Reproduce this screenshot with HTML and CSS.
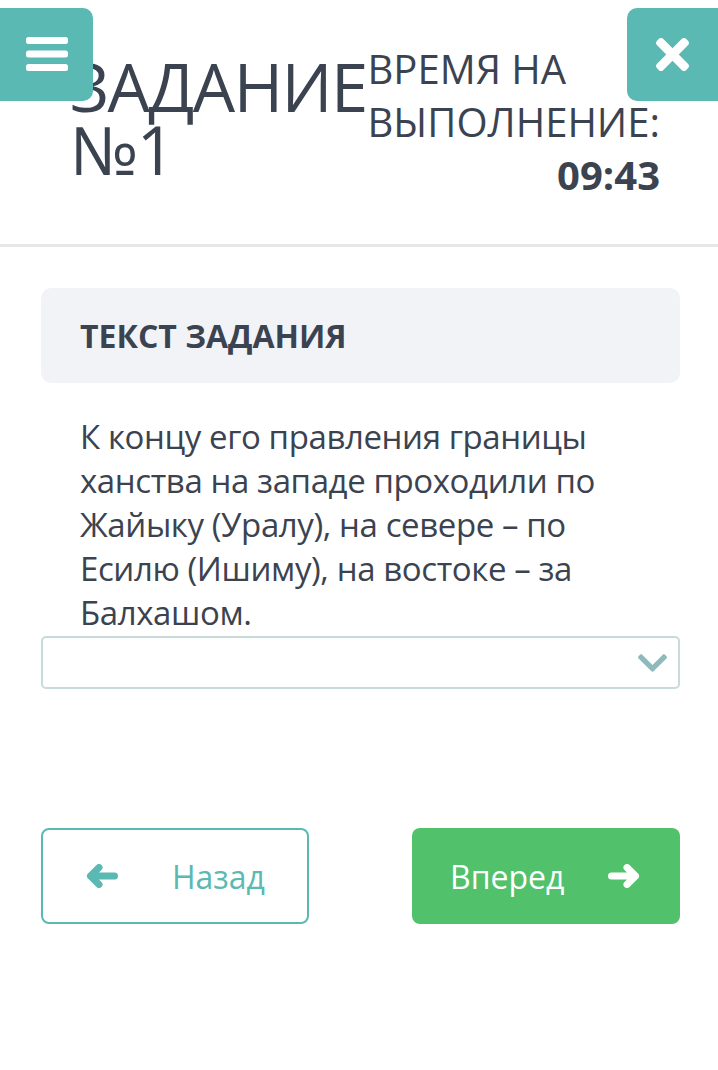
FILE: index.html
```html
<!DOCTYPE html>
<html lang="ru">
<head>
    <meta charset="UTF-8">
    <meta name="viewport" content="width=device-width, initial-scale=1.0">
    <title>Задание №1</title>
    <link rel="stylesheet" href="styles.css">
</head>
<body>

<!-- Шапка: номер задания и таймер -->
<header class="header">
    <button class="side-btn menu-btn" aria-label="Меню">
        <svg width="42" height="35" viewBox="0 0 42 35">
            <rect x="0" y="0" width="42" height="7" rx="2.5" fill="#fff"/>
            <rect x="0" y="13.5" width="42" height="7" rx="2.5" fill="#fff"/>
            <rect x="0" y="27" width="42" height="7" rx="2.5" fill="#fff"/>
        </svg>
    </button>
    <h1 class="task-title">ЗАДАНИЕ №1</h1>
    <div class="timer">
        <div>ВРЕМЯ НА</div>
        <div>ВЫПОЛНЕНИЕ:</div>
        <div class="timer-value">09:43</div>
    </div>
    <button class="side-btn close-btn" aria-label="Закрыть">
        <svg width="33" height="33" viewBox="0 80 352 352">
            <path fill="#fff" d="M242.72 256l100.07-100.07c12.28-12.28 12.28-32.19 0-44.48l-22.24-22.24c-12.28-12.28-32.19-12.28-44.48 0L176 189.28 75.93 89.21c-12.28-12.28-32.19-12.28-44.48 0L9.210 111.45c-12.28 12.28-12.28 32.19 0 44.48L109.28 256 9.21 356.07c-12.28 12.28-12.28 32.19 0 44.48l22.24 22.24c12.28 12.28 32.2 12.28 44.48 0L176 322.72l100.07 100.07c12.28 12.28 32.2 12.28 44.48 0l22.24-22.24c12.28-12.28 12.28-32.19 0-44.48L242.72 256z"/>
        </svg>
    </button>
</header>

<main class="content">
    <div class="task-head">ТЕКСТ ЗАДАНИЯ</div>
    <p class="task-text">К концу его правления границы ханства на западе проходили по Жайыку (Уралу), на севере – по Есилю (Ишиму), на востоке – за Балхашом.</p>

    <!-- Выбор ответа -->
    <div class="answer-select">
        <svg width="29" height="18" viewBox="5 123 438 265">
            <path fill="#8dbabd" d="M207.029 381.476L12.686 187.132c-9.373-9.373-9.373-24.569 0-33.941l22.667-22.667c9.357-9.357 24.522-9.375 33.901-.04L224 284.505l154.745-154.021c9.379-9.335 24.544-9.317 33.901.04l22.667 22.667c9.373 9.373 9.373 24.569 0 33.941L240.971 381.476c-9.373 9.372-24.569 9.372-33.942 0z"/>
        </svg>
    </div>

    <div class="nav">
        <button class="nav-btn back">
            <svg width="32" height="24" viewBox="0 0 32 24">
                <path d="M28.5 12H4.5M13 3.5L4.5 12 13 20.5" fill="none" stroke="#5bb9b3" stroke-width="7" stroke-linecap="round" stroke-linejoin="round"/>
            </svg>
            <span>Назад</span>
        </button>
        <button class="nav-btn next">
            <span>Вперед</span>
            <svg width="32" height="24" viewBox="0 0 32 24">
                <path d="M3.5 12h24M19 3.5l8.5 8.5-8.5 8.5" fill="none" stroke="#fff" stroke-width="7" stroke-linecap="round" stroke-linejoin="round"/>
            </svg>
        </button>
    </div>
</main>

</body>
</html>
```

FILE: styles.css
```css
body {
    font-family: "Open Sans", "Noto Sans", sans-serif;
    color: #3b4350;
    background: #fff;
    margin: 0;
    padding: 0;
}
button {
    font-family: inherit;
    cursor: pointer;
}
.header {
    position: relative;
    display: flex;
    justify-content: space-between;
    align-items: flex-start;
    height: 247px;
    padding: 0 58px 0 70px;
    box-sizing: border-box;
    border-bottom: 3px solid #e6e7e9;
}
.side-btn {
    position: absolute;
    top: 8px;
    height: 93px;
    border: none;
    background-color: #5bb9b3;
    display: flex;
    align-items: center;
    justify-content: center;
    padding: 0;
}
.menu-btn {
    left: 0;
    width: 93px;
    border-radius: 0 10px 10px 0;
}
.close-btn {
    right: 0;
    width: 91px;
    border-radius: 10px 0 0 10px;
}
.task-title {
    width: 297px;
    margin: 55px 0 0;
    font-size: 67px;
    font-weight: 400;
    line-height: 63px;
    letter-spacing: -1.5px;
}
.timer {
    margin-top: 42px;
    font-size: 40px;
    line-height: 53px;
}
.timer .timer-value {
    text-align: right;
    font-weight: 700;
}
.content {
    padding: 41px 38px 0 41px;
}
.task-head {
    background-color: #f2f3f7;
    border-radius: 10px;
    height: 95px;
    padding: 0 39px;
    display: flex;
    align-items: center;
    font-size: 32px;
    font-weight: 700;
}
.task-text {
    margin: 32px 0 0;
    padding: 0 60px 0 39px;
    font-size: 33px;
    line-height: 44px;
    letter-spacing: -0.4px;
}
.answer-select {
    height: 53px;
    margin-top: 1px;
    box-sizing: border-box;
    border: 2px solid #c9dadb;
    border-radius: 5px;
    display: flex;
    align-items: center;
    justify-content: flex-end;
    padding-right: 11px;
}
.nav {
    display: flex;
    justify-content: space-between;
    margin-top: 139px;
}
.nav-btn {
    width: 268px;
    height: 96px;
    box-sizing: border-box;
    border-radius: 8px;
    font-size: 32px;
    display: flex;
    align-items: center;
    justify-content: space-between;
}
.back {
    background: #fff;
    color: #5bb9b3;
    border: 2px solid #5bb9b3;
    padding: 0 42px 0 43px;
}
.next {
    background-color: #52c16b;
    color: #fff;
    border: none;
    padding: 0 40px 0 38px;
}
```
